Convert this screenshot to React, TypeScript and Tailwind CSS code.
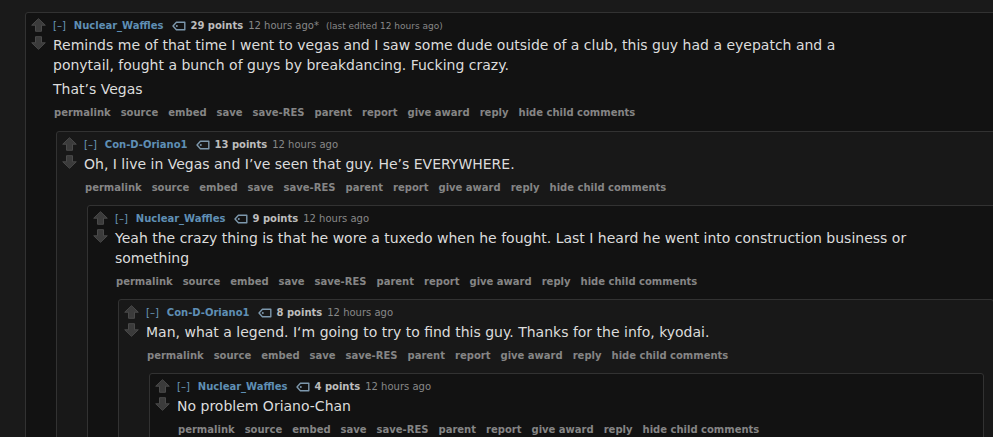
import React from "react";

type CommentData = {
  author: string;
  points: number;
  time: string;
  edited?: string;
  body: string[];
  children?: CommentData[];
};

const THREAD: CommentData = {
  author: "Nuclear_Waffles",
  points: 29,
  time: "12 hours ago*",
  edited: "(last edited 12 hours ago)",
  body: [
    "Reminds me of that time I went to vegas and I saw some dude outside of a club, this guy had a eyepatch and a ponytail, fought a bunch of guys by breakdancing. Fucking crazy.",
    "That’s Vegas",
  ],
  children: [
    {
      author: "Con-D-Oriano1",
      points: 13,
      time: "12 hours ago",
      body: ["Oh, I live in Vegas and I’ve seen that guy. He’s EVERYWHERE."],
      children: [
        {
          author: "Nuclear_Waffles",
          points: 9,
          time: "12 hours ago",
          body: [
            "Yeah the crazy thing is that he wore a tuxedo when he fought. Last I heard he went into construction business or something",
          ],
          children: [
            {
              author: "Con-D-Oriano1",
              points: 8,
              time: "12 hours ago",
              body: ["Man, what a legend. I‘m going to try to find this guy. Thanks for the info, kyodai."],
              children: [
                {
                  author: "Nuclear_Waffles",
                  points: 4,
                  time: "12 hours ago",
                  body: ["No problem Oriano-Chan"],
                },
              ],
            },
          ],
        },
      ],
    },
  ],
};

const BUTTONS = [
  "permalink",
  "source",
  "embed",
  "save",
  "save-RES",
  "parent",
  "report",
  "give award",
  "reply",
  "hide child comments",
];

function Arrow({ down = false }: { down?: boolean }) {
  return (
    <svg
      width="15"
      height="14"
      viewBox="0 0 15 14"
      className={down ? "rotate-180" : ""}
      aria-hidden="true"
    >
      <path
        d="M7.5 0.7 L14.3 7.2 H10.5 V13.3 H4.5 V7.2 H0.7 Z"
        fill="#3b3b3b"
        stroke="#4a4a4a"
        strokeWidth="1"
      />
    </svg>
  );
}

function TagIcon() {
  return (
    <svg width="14" height="10" viewBox="0 0 14 10" aria-hidden="true">
      <path
        d="M1 5 L4.4 1.2 H12.8 V8.8 H4.4 Z"
        fill="none"
        stroke="#7d98ad"
        strokeWidth="1.4"
        strokeLinejoin="round"
      />
      <circle cx="4.8" cy="5" r="1" fill="#7d98ad" />
    </svg>
  );
}

function Comment({ data, depth }: { data: CommentData; depth: number }) {
  const bg = depth % 2 === 0 ? "bg-[#121212]" : "bg-[#181818]";
  return (
    <div className={`flex rounded-[3px] border border-[#323232] ${bg} pt-[3px]`}>
      {/* vote arrows */}
      <div className="flex w-[27px] shrink-0 flex-col gap-[4px] pl-[5px] pt-[2px]">
        <Arrow />
        <Arrow down />
      </div>

      <div className="flex min-w-0 flex-1 flex-col">
        {/* tagline */}
        <div className="mt-[2px] flex h-[16px] items-center text-[10px] leading-[16px] text-[#888] whitespace-nowrap">
          <span className="text-[#6a97b8]">[–]</span>
          <span className="ml-[8px] font-bold text-[#5f8fb5]">{data.author}</span>
          <span className="ml-[9px] mr-[4px] flex items-center">
            <TagIcon />
          </span>
          <span className="font-bold text-[#bdbdbd]">{data.points} points</span>
          <span className="ml-[5px]">{data.time}</span>
          {data.edited && <span className="ml-[7px] text-[9px]">{data.edited}</span>}
        </div>

        {/* body */}
        <div className="mt-[1px] max-w-[840px] text-[14px] leading-[20px] text-[#dcdcdc]">
          {data.body.map((p, i) => (
            <p key={i} className="mb-[4px]">
              {p}
            </p>
          ))}
        </div>

        {/* buttons */}
        <ul className="mt-[2px] flex h-[15px] items-center gap-[10px] pl-[1px] text-[10px] font-bold leading-[15px] text-[#858585] whitespace-nowrap">
          {BUTTONS.map((b) => (
            <li key={b}>{b}</li>
          ))}
        </ul>

        {data.children && (
          <div className={`${depth === 0 ? "mt-[11px]" : "mt-[10px]"} ml-[3px] mr-[9px]`}>
            {data.children.map((c, i) => (
              <Comment key={i} data={c} depth={depth + 1} />
            ))}
          </div>
        )}
        {!data.children && <div className="h-[40px]" />}
      </div>
    </div>
  );
}

export default function App() {
  return (
    <div
      className="h-screen w-full overflow-hidden bg-[#1a1a1a] pt-[12px] pl-[25px]"
      style={{ fontFamily: '"DejaVu Sans", Verdana, sans-serif' }}
    >
      <div className="w-[999px]">
        <Comment data={THREAD} depth={0} />
      </div>
    </div>
  );
}
